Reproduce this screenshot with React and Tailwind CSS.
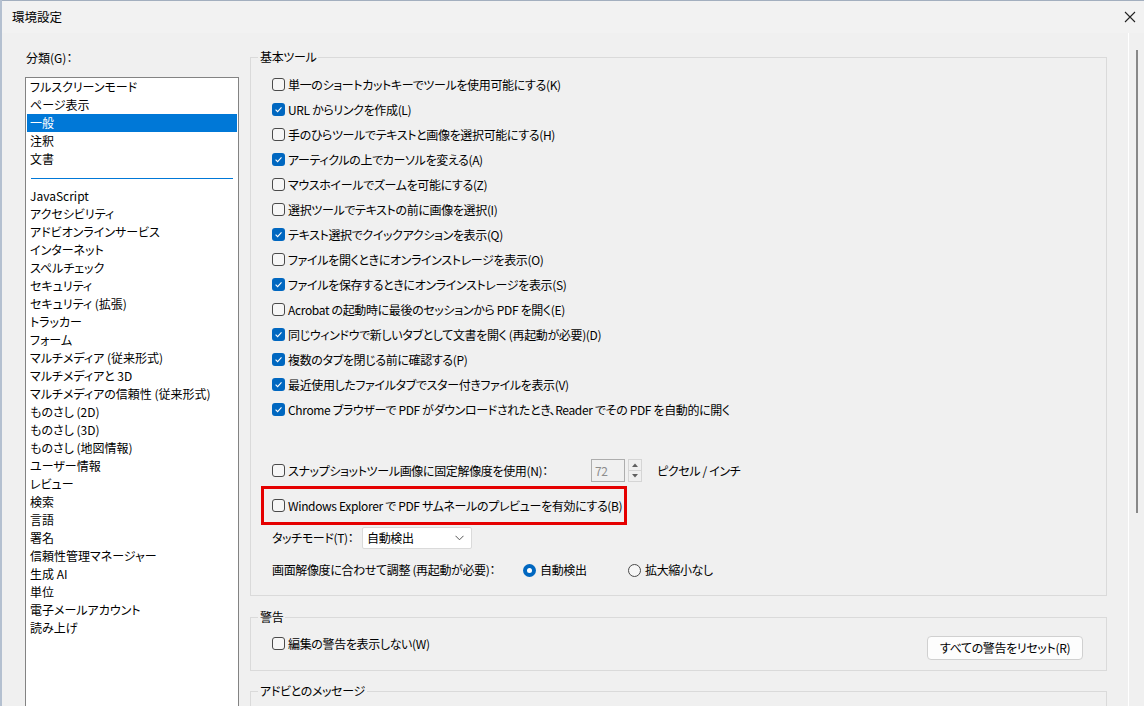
import React from "react";

const Check = ({ checked }) =>
  checked ? (
    <span className="w-[13px] h-[13px] rounded-[3px] bg-[#0067c0] flex items-center justify-center shrink-0">
      <svg width="9" height="9" viewBox="0 0 9 9">
        <path d="M1.6 4.7 L3.6 6.6 L7.5 2.4" stroke="white" strokeWidth="1.1" fill="none" />
      </svg>
    </span>
  ) : (
    <span className="w-[13px] h-[13px] rounded-[3px] border border-[#4a4a4a] bg-[#f6f6f6] shrink-0" />
  );

const Row = ({ checked, children }) => (
  <div className="flex items-center gap-[3px] h-[25px]">
    <Check checked={checked} />
    <span className="whitespace-nowrap">{children}</span>
  </div>
);

const Group = ({ title, className = "", children }) => (
  <div className={"relative w-[857px] border border-[#dadada] " + className}>
    <span className="absolute -top-[10px] left-[7px] px-[2px] bg-[#f0f0f0] leading-[18px] whitespace-nowrap">{title}</span>
    {children}
  </div>
);

const top = ["フルスクリーンモード", "ページ表示", "一般", "注釈", "文書"];
const rest = [
  "JavaScript",
  "アクセシビリティ",
  "アドビオンラインサービス",
  "インターネット",
  "スペルチェック",
  "セキュリティ",
  "セキュリティ (拡張)",
  "トラッカー",
  "フォーム",
  "マルチメディア (従来形式)",
  "マルチメディアと 3D",
  "マルチメディアの信頼性 (従来形式)",
  "ものさし (2D)",
  "ものさし (3D)",
  "ものさし (地図情報)",
  "ユーザー情報",
  "レビュー",
  "検索",
  "言語",
  "署名",
  "信頼性管理マネージャー",
  "生成 AI",
  "単位",
  "電子メールアカウント",
  "読み上げ",
];

const basic = [
  [false, "単一のショートカットキーでツールを使用可能にする(K)"],
  [true, "URL からリンクを作成(L)"],
  [false, "手のひらツールでテキストと画像を選択可能にする(H)"],
  [true, "アーティクルの上でカーソルを変える(A)"],
  [false, "マウスホイールでズームを可能にする(Z)"],
  [false, "選択ツールでテキストの前に画像を選択(I)"],
  [true, "テキスト選択でクイックアクションを表示(Q)"],
  [false, "ファイルを開くときにオンラインストレージを表示(O)"],
  [true, "ファイルを保存するときにオンラインストレージを表示(S)"],
  [false, "Acrobat の起動時に最後のセッションから PDF を開く(E)"],
  [true, "同じウィンドウで新しいタブとして文書を開く (再起動が必要)(D)"],
  [true, "複数のタブを閉じる前に確認する(P)"],
  [true, "最近使用したファイルタブでスター付きファイルを表示(V)"],
  [true, "Chrome ブラウザーで PDF がダウンロードされたとき、Reader でその PDF を自動的に開く"],
];

export default function App() {
  return (
    <div
      className="w-[1144px] h-[706px] overflow-hidden bg-[#f0f0f0] text-[12px] text-black border-l-2 border-[#b4c0d0] flex flex-col [font-feature-settings:'palt']"
      style={{ fontFamily: '"Noto Sans CJK JP", "Noto Sans", sans-serif' }}
    >
      {/* title bar */}
      <div className="h-[33px] shrink-0 flex items-center justify-between pl-[10px] pr-[7px] bg-[#f2f2f2] border-t border-[#a3afbf]">
        <span className="leading-[18px] text-[12.5px]">環境設定</span>
        <svg width="12" height="12" viewBox="0 0 12 12" className="mr-[1px]">
          <path d="M1 1 L11 11 M11 1 L1 11" stroke="#222" strokeWidth="1.1" />
        </svg>
      </div>

      <div className="flex flex-1 min-h-0">
        {/* left column */}
        <div className="w-[248px] shrink-0 pl-[23px] pt-[16px]">
          <div className="leading-[18px] pl-[1px]">分類(G)：</div>
          <div className="mt-[10px] w-[214px] h-[640px] bg-white border border-[#838383] px-[1px] leading-[18px]">
            {top.map((t) => (
              <div
                key={t}
                className={
                  "h-[18px] pl-[3px] whitespace-nowrap " + (t === "一般" ? "bg-[#0078d7] text-white" : "")
                }
              >
                {t}
              </div>
            ))}
            <div className="mt-[10px] mb-[8px] mx-[4px] h-[1px] bg-[#0078d7]" />
            {rest.map((t) => (
              <div key={t} className="h-[18px] pl-[3px] whitespace-nowrap">
                {t}
              </div>
            ))}
          </div>
        </div>

        {/* right column */}
        <div className="w-[878px] shrink-0 pt-[24px] leading-[18px] tracking-[-0.35px]">
          <Group title="基本ツール" className="pt-[14px] pb-[13px]">
            <div className="pl-[21px]">
              {basic.map(([c, t], i) => (
                <Row key={i} checked={c}>
                  {t}
                </Row>
              ))}
              <div className="mt-[36px] h-[25px] flex items-center">
                <Check checked={false} />
                <span className="ml-[3px] whitespace-nowrap w-[303px]">スナップショットツール画像に固定解像度を使用(N)：</span>
                <div className="w-[34px] h-[23px] border border-[#adadad] bg-[#f0f0f0] text-[#8d8d8d] pl-[3px] flex items-center">72</div>
                <div className="ml-[3px] w-[14px] h-[23px] border border-[#d5d5d5] flex flex-col">
                  <div className="flex-1 flex items-center justify-center border-b border-[#d5d5d5]">
                    <svg width="6" height="4" viewBox="0 0 6 4"><path d="M0 4 L3 0.5 L6 4 Z" fill="#606060" /></svg>
                  </div>
                  <div className="flex-1 flex items-center justify-center">
                    <svg width="6" height="4" viewBox="0 0 6 4"><path d="M0 0 L3 3.5 L6 0 Z" fill="#606060" /></svg>
                  </div>
                </div>
                <span className="ml-[15px] whitespace-nowrap">ピクセル / インチ</span>
              </div>
              <div className="-ml-[11px] mt-[3px] w-fit h-[39px] border-[3px] border-[#e50000] pl-[8px] pr-[2px] flex items-center">
                <Check checked={false} />
                <span className="ml-[3px] whitespace-nowrap">Windows Explorer で PDF サムネールのプレビューを有効にする(B)</span>
              </div>
              <div className="mt-[2px] h-[22px] flex items-center">
                <span className="w-[90px] whitespace-nowrap">タッチモード(T)：</span>
                <div className="w-[110px] h-[22px] bg-white border border-[#dadada] rounded-[2px] flex items-center justify-between pl-[4px] pr-[7px]">
                  <span>自動検出</span>
                  <svg width="9" height="6" viewBox="0 0 9 6"><path d="M0.5 0.8 L4.5 4.8 L8.5 0.8" stroke="#555" strokeWidth="1" fill="none" /></svg>
                </div>
              </div>
              <div className="mt-[9px] h-[24px] flex items-center">
                <span className="w-[251px] whitespace-nowrap">画面解像度に合わせて調整 (再起動が必要)：</span>
                <span className="w-[13px] h-[13px] rounded-full bg-[#0067c0] flex items-center justify-center shrink-0">
                  <span className="w-[5px] h-[5px] rounded-full bg-white" />
                </span>
                <span className="ml-[4px] w-[88px] whitespace-nowrap">自動検出</span>
                <span className="w-[13px] h-[13px] rounded-full border border-[#4a4a4a] bg-[#f6f6f6] shrink-0" />
                <span className="ml-[4px] whitespace-nowrap">拡大縮小なし</span>
              </div>
            </div>
          </Group>

          <Group title="警告" className="mt-[21px] pt-[13px] pb-[10px] pr-[23px] pl-[21px] flex items-start justify-between">
            <Row checked={false}>編集の警告を表示しない(W)</Row>
            <button className="mt-[5px] w-[156px] h-[24px] bg-[#fdfdfd] border border-[#d0d0d0] rounded-[4px] flex items-center justify-center">
              すべての警告をリセット(R)
            </button>
          </Group>

          <Group title="アドビとのメッセージ" className="mt-[20px] h-[60px]" />
        </div>

        {/* scrollbar */}
        <div className="w-[1px] bg-white shrink-0" />
        <div className="flex-1">
          <div className="ml-[7px] mt-[17px] w-[2px] h-[463px] bg-[#888888]" />
        </div>
      </div>
    </div>
  );
}
